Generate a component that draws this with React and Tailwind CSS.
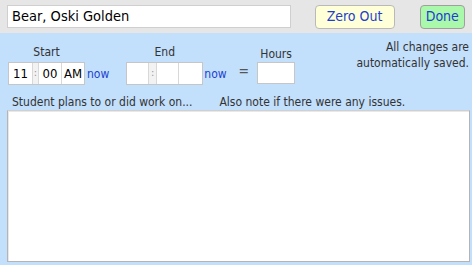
import React from "react";

const font = { fontFamily: "Tahoma, 'DejaVu Sans Condensed', 'DejaVu Sans', sans-serif" };

function TimeBox({ a, b, c, w }) {
  return (
    <div className="flex h-[23px] border border-[#c6c6c6] bg-white text-[13px] text-black">
      <div className={`flex items-center justify-center ${w[0]}`}>{a}</div>
      <div className={`flex items-center justify-center border-x border-[#d8d8d8] bg-[#f2f2f2] text-[#999] text-[11px] ${w[1]}`}>:</div>
      <div className={`flex items-center justify-center ${w[2]}`}>{b}</div>
      <div className={`flex items-center justify-center border-l border-[#d8d8d8] ${w[3]}`}>{c}</div>
    </div>
  );
}

export default function App() {
  return (
    <div className="w-[472px] h-[265px] flex flex-col bg-[#c2dffc] text-[#333]" style={font}>
      <div className="h-[33px] bg-[#e6e6e6] flex items-center px-[7px]">
        <div className="w-[287px] h-[23px] bg-white border border-[#cfcfcf] flex items-center pl-[4px] text-[14.5px] text-black">
          Bear, Oski Golden
        </div>
        <div className="ml-[24px] w-[81px] h-[24px] rounded-[4px] border border-[#b9b9b9] bg-[#ffffd8] flex items-center justify-center text-[14px] text-[#1c3fd0]">
          Zero Out
        </div>
        <div className="ml-[25px] w-[46px] h-[24px] rounded-[4px] border border-[#9f9f9f] bg-[#aaf8aa] flex items-center justify-center text-[14px] text-[#1c3fd0]">
          Done
        </div>
      </div>
      <div className="flex flex-col flex-1 pl-[7px] pr-[2px] pb-[3px]">
        <div className="flex items-start h-[57px]">
          <div className="flex flex-col items-start pt-[12px] ml-[1px]">
            <div className="text-[12px] leading-[14px] w-[77px] text-center">Start</div>
            <div className="flex items-center mt-[3px]">
              <TimeBox a="11" b="00" c="AM" w={["w-[23px]", "w-[7px]", "w-[22px]", "w-[23px]"]} />
              <span className="ml-[2px] text-[12px] text-[#1c3fd0]">now</span>
            </div>
          </div>
          <div className="flex flex-col items-start pt-[12px] ml-[17px]">
            <div className="text-[12px] leading-[14px] w-[77px] text-center">End</div>
            <div className="flex items-center mt-[3px]">
              <TimeBox a="" b="" c="" w={["w-[21px]", "w-[9px]", "w-[21px]", "w-[24px]"]} />
              <span className="ml-[1px] text-[12px] text-[#1c3fd0]">now</span>
            </div>
          </div>
          <div className="flex items-end ml-[12px] pt-[14px]">
            <span className="text-[14px] text-[#555] mb-[2px]">=</span>
            <div className="flex flex-col items-center ml-[8px]">
              <div className="text-[12px] leading-[14px]">Hours</div>
              <div className="mt-[1px] w-[38px] h-[22px] bg-white border border-[#c6c6c6]" />
            </div>
          </div>
          <div className="ml-auto mr-[1px] pt-[6px] text-right text-[12px] leading-[16px]">
            All changes are<br />automatically saved.
          </div>
        </div>
        <div className="flex text-[12px] leading-[16px] pl-[5px] pt-[4px]">
          <span>Student plans to or did work on...</span>
          <span className="ml-[27px]">Also note if there were any issues.</span>
        </div>
        <div className="flex-1 bg-white border border-[#b4b4b4] border-t-[#d0d0d0] shadow-[inset_1px_1px_0_#e8e8e8]" />
      </div>
    </div>
  );
}
